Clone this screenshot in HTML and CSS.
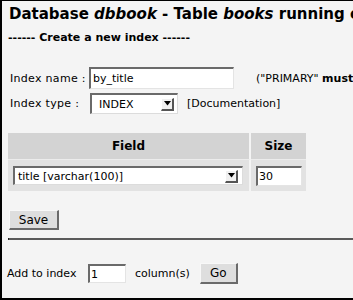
FILE: index.html
```html
<!DOCTYPE html>
<html>
<head>
<meta charset="utf-8">
<link rel="stylesheet" href="styles.css">
</head>
<body>
<div class="frame">
  <h1 class="title">Database <i>dbbook</i> - Table <i>books</i> running on</h1>
  <div class="legend">------ Create a new index ------</div>
  <div class="row row-name">
    <span class="label">Index name :</span>
    <span class="input input-name">by_title</span>
    <span class="note">("PRIMARY" <b>must</b></span>
  </div>
  <div class="row row-type">
    <span class="label">Index type :</span>
    <span class="select select-type"><span class="select-text">INDEX</span><span class="arrow"><svg width="7" height="5" viewBox="0 0 7 5"><path d="M0 0H7L3.5 4.5Z" fill="#000"/></svg></span></span>
    <span class="doc">[Documentation]</span>
  </div>
  <table class="fields">
    <tr><th class="c-field">Field</th><th class="c-size">Size</th></tr>
    <tr>
      <td class="c-field"><span class="select select-field"><span class="select-text">title [varchar(100)]</span><span class="arrow"><svg width="7" height="5" viewBox="0 0 7 5"><path d="M0 0H7L3.5 4.5Z" fill="#000"/></svg></span></span></td>
      <td class="c-size"><span class="input input-size">30</span></td>
    </tr>
  </table>
  <div class="save-row"><span class="button btn-save">Save</span></div>
  <div class="rule"></div>
  <div class="row row-add">
    <span class="add-label">Add to index</span>
    <span class="input input-add">1</span>
    <span class="cols">column(s)</span>
    <span class="button btn-go">Go</span>
  </div>
</div>
</body>
</html>
```
FILE: styles.css
```css
html, body {
  margin: 0;
  padding: 0;
  background: #f4f4f4;
}
body {
  width: 353px;
  height: 300px;
  overflow: hidden;
  font-family: "DejaVu Sans", sans-serif;
  font-size: 11px;
  color: #000;
}
.frame {
  box-sizing: border-box;
  height: 300px;
  width: 353px;
  overflow: hidden;
  border-left: 2px solid #000;
  border-top: 1px solid #000;
  border-bottom: 2px solid #000;
  padding: 0 0 0 5px;
  white-space: nowrap;
}
.title {
  margin: 3px 0 0 2px;
  font-size: 15px;
  font-weight: bold;
  line-height: 20px;
}
.legend {
  margin: 7px 0 0 1px;
  font-size: 11px;
  font-weight: bold;
  line-height: 14px;
}
.row {
  display: flex;
  align-items: center;
}
.row > * {
  flex-shrink: 0;
}
.row-name {
  margin-top: 22px;
  height: 22px;
  padding-left: 3px;
}
.row-type {
  margin-top: 4px;
  height: 21px;
  padding-left: 3px;
}
.label {
  width: 79px;
  letter-spacing: 0.3px;
}
.input {
  box-sizing: border-box;
  display: inline-flex;
  align-items: center;
  background: #fff;
  border-top: 2px solid #6a6a6a;
  border-left: 2px solid #6a6a6a;
  border-right: 1px solid #e4e4e4;
  border-bottom: 1px solid #e4e4e4;
  padding-left: 2px;
}
.input-name {
  width: 145px;
  height: 22px;
}
.note {
  margin-left: 22px;
}
.select {
  box-sizing: border-box;
  display: inline-flex;
  align-items: center;
  justify-content: space-between;
  background: #fff;
  border-top: 2px solid #6a6a6a;
  border-left: 2px solid #6a6a6a;
  border-right: 1px solid #dcdcdc;
  border-bottom: 1px solid #dcdcdc;
  padding-left: 7px;
  padding-right: 3px;
}
.select-type {
  width: 88px;
  height: 21px;
  margin-left: 1px;
}
.arrow {
  box-sizing: border-box;
  width: 13px;
  height: 13px;
  display: inline-flex;
  align-items: center;
  justify-content: center;
  background: #f0f0f0;
  border-right: 2px solid #555;
  border-bottom: 2px solid #555;
  border-top: 1px solid #fff;
  border-left: 1px solid #fff;
}
.doc {
  margin-left: 9px;
}
.fields {
  margin-top: 19px;
  border-collapse: separate;
  border-spacing: 0;
  margin-left: 1px;
}
.fields th {
  background: #d3d3d3;
  font-weight: bold;
  font-size: 12px;
  height: 26px;
  padding: 0;
  text-align: center;
}
.fields td {
  background: #e2e2e2;
  height: 31px;
  padding: 0;
}
.fields th.c-field, .fields td.c-field {
  width: 241px;
  border-right: 2px solid #f4f4f4;
}
.fields th.c-size, .fields td.c-size {
  width: 55px;
}
.fields tr + tr td {
  border-top: 1px solid #ececec;
}
.select-field {
  margin-left: 5px;
  width: 230px;
  height: 19px;
  padding-left: 3px;
  padding-right: 4px;
}
.input-size {
  margin-left: 5px;
  width: 46px;
  height: 20px;
  padding-left: 1px;
}
.save-row {
  margin-top: 19px;
  margin-left: 2px;
  height: 20px;
}
.button {
  box-sizing: border-box;
  display: inline-flex;
  align-items: center;
  justify-content: center;
  background: #dedede;
  border-top: 1px solid #f8f8f8;
  border-left: 1px solid #f8f8f8;
  border-right: 2px solid #6a6a6a;
  border-bottom: 2px solid #6a6a6a;
  font-size: 12px;
}
.btn-save {
  width: 50px;
  height: 20px;
}
.rule {
  margin-top: 8px;
  margin-left: 1px;
  height: 2px;
  background: #5a5a5a;
  border-left: 1px solid #222;
}
.row-add {
  margin-top: 23px;
  height: 21px;
  padding-left: 0;
}
.add-label {
  width: 81px;
}
.input-add {
  width: 38px;
  height: 19px;
  padding-left: 1px;
}
.cols {
  margin-left: 9px;
}
.btn-go {
  margin-left: 10px;
  width: 38px;
  height: 21px;
}
```
